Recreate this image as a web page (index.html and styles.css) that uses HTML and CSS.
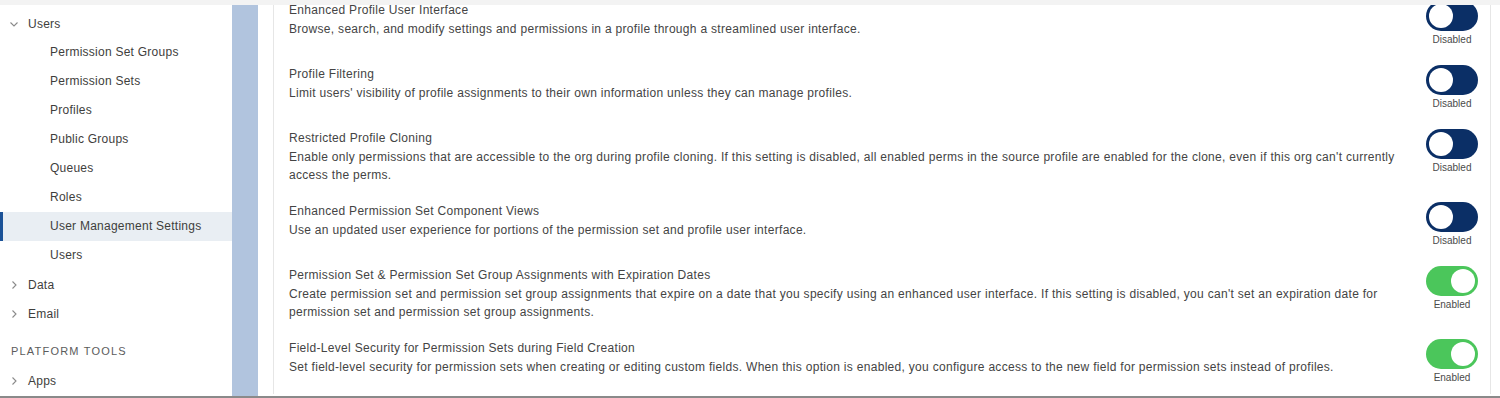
FILE: index.html
```html
<!doctype html>
<html lang="en">
  <head>
    <meta charset="UTF-8" />
    <title>User Management Settings</title>
    <link rel="stylesheet" href="styles.css">
  </head>

  <body>
    <div class="topbar"></div>

    <div class="page">
      <nav class="setup-tree">
        <div class="tree-node">
          <svg class="chevron" width="10" height="10" viewBox="0 0 10 10"><polyline points="1.5,3.5 5,7 8.5,3.5" /></svg>
          <span>Users</span>
        </div>
        <ul class="tree-children">
          <li>Permission Set Groups</li>
          <li>Permission Sets</li>
          <li>Profiles</li>
          <li>Public Groups</li>
          <li>Queues</li>
          <li>Roles</li>
          <li class="active">User Management Settings</li>
          <li>Users</li>
        </ul>
        <div class="tree-node">
          <svg class="chevron" width="10" height="10" viewBox="0 0 10 10"><polyline points="3.5,1.5 7,5 3.5,8.5" /></svg>
          <span>Data</span>
        </div>
        <div class="tree-node">
          <svg class="chevron" width="10" height="10" viewBox="0 0 10 10"><polyline points="3.5,1.5 7,5 3.5,8.5" /></svg>
          <span>Email</span>
        </div>
        <div class="tree-section">Platform Tools</div>
        <div class="tree-node">
          <svg class="chevron" width="10" height="10" viewBox="0 0 10 10"><polyline points="3.5,1.5 7,5 3.5,8.5" /></svg>
          <span>Apps</span>
        </div>
      </nav>

      <div class="gutter"></div>

      <main class="main">
        <div class="panel">
          <div class="setting">
            <div class="setting-text">
              <div class="setting-title">Enhanced Profile User Interface</div>
              <div class="setting-desc">Browse, search, and modify settings and permissions in a profile through a streamlined user interface.</div>
            </div>
            <div class="toggle">
              <span class="switch"></span>
              <span class="switch-label">Disabled</span>
            </div>
          </div>

          <div class="setting">
            <div class="setting-text">
              <div class="setting-title">Profile Filtering</div>
              <div class="setting-desc">Limit users' visibility of profile assignments to their own information unless they can manage profiles.</div>
            </div>
            <div class="toggle">
              <span class="switch"></span>
              <span class="switch-label">Disabled</span>
            </div>
          </div>

          <div class="setting">
            <div class="setting-text">
              <div class="setting-title">Restricted Profile Cloning</div>
              <div class="setting-desc">Enable only permissions that are accessible to the org during profile cloning. If this setting is disabled, all enabled perms in the source profile are enabled for the clone, even if this org can't currently access the perms.</div>
            </div>
            <div class="toggle">
              <span class="switch"></span>
              <span class="switch-label">Disabled</span>
            </div>
          </div>

          <div class="setting">
            <div class="setting-text">
              <div class="setting-title">Enhanced Permission Set Component Views</div>
              <div class="setting-desc">Use an updated user experience for portions of the permission set and profile user interface.</div>
            </div>
            <div class="toggle">
              <span class="switch"></span>
              <span class="switch-label">Disabled</span>
            </div>
          </div>

          <div class="setting">
            <div class="setting-text">
              <div class="setting-title">Permission Set &amp; Permission Set Group Assignments with Expiration Dates</div>
              <div class="setting-desc">Create permission set and permission set group assignments that expire on a date that you specify using an enhanced user interface. If this setting is disabled, you can't set an expiration date for permission set and permission set group assignments.</div>
            </div>
            <div class="toggle">
              <span class="switch on"></span>
              <span class="switch-label">Enabled</span>
            </div>
          </div>

          <div class="setting">
            <div class="setting-text">
              <div class="setting-title">Field-Level Security for Permission Sets during Field Creation</div>
              <div class="setting-desc">Set field-level security for permission sets when creating or editing custom fields. When this option is enabled, you configure access to the new field for permission sets instead of profiles.</div>
            </div>
            <div class="toggle">
              <span class="switch on"></span>
              <span class="switch-label">Enabled</span>
            </div>
          </div>
        </div>
      </main>
    </div>
  </body>
</html>
```

FILE: styles.css
```css
* {
  margin: 0;
  padding: 0;
  box-sizing: border-box;
  font-family: 'Liberation Sans', Arial, sans-serif;
}

body {
  width: 1500px;
  height: 398px;
  overflow: hidden;
  background-color: white;
  color: #3e3e3c;
}

.topbar {
  height: 5px;
  background-color: #f3f3f3;
}

.page {
  display: flex;
  height: 393px;
  border-bottom: 2px solid #8a8a8a;
}

/* left setup tree */
.setup-tree {
  width: 232px;
  flex-shrink: 0;
  padding-top: 4px;
  overflow: hidden;
  font-size: 12px;
  letter-spacing: 0.25px;
}

.tree-node {
  display: flex;
  align-items: center;
  height: 29px;
  padding-left: 9px;
}

.tree-node span {
  margin-left: 9px;
}

.chevron {
  fill: none;
  stroke: #8a8a8a;
  stroke-width: 1.1;
}

.tree-children {
  list-style: none;
}

.tree-children li {
  height: 29px;
  line-height: 29px;
  padding-left: 47px;
  border-left: 3px solid transparent;
}

.tree-children li.active {
  background-color: #e9eef3;
  border-left-color: #1b5297;
}

.tree-section {
  padding: 15px 11px 7px;
  line-height: 16px;
  font-size: 11px;
  letter-spacing: 1.2px;
  text-transform: uppercase;
  color: #5c5c5c;
}

.gutter {
  width: 26px;
  flex-shrink: 0;
  background-color: #b1c4de;
}

/* settings panel */
.main {
  flex: 1;
  overflow: hidden;
  padding: 0 9px 0 15px;
}

.panel {
  min-height: 100%;
  border-left: 1px solid #e6e6e6;
  border-right: 1px solid #e6e6e6;
  padding: 0 12px 0 15px;
}

.setting {
  display: flex;
  align-items: flex-start;
  gap: 16px;
  padding: 9px 0;
}

/* the list is scrolled a little */
.setting:first-child {
  margin-top: -13px;
}

.setting-text {
  flex: 1;
  font-size: 12px;
  line-height: 18px;
  letter-spacing: 0.3px;
  color: #444;
}

.setting-desc {
  margin-top: 1px;
}

.toggle {
  width: 52px;
  flex-shrink: 0;
  display: flex;
  flex-direction: column;
  align-items: center;
}

.switch {
  position: relative;
  width: 52px;
  height: 30px;
  border-radius: 15px;
  background-color: #0b2f66;
}

.switch::after {
  content: '';
  position: absolute;
  top: 3px;
  left: 3px;
  width: 24px;
  height: 24px;
  border-radius: 50%;
  background-color: white;
}

.switch.on {
  background-color: #4bc65b;
}

.switch.on::after {
  left: 25px;
}

.switch-label {
  margin-top: 2px;
  line-height: 14px;
  font-size: 10px;
  color: #4a4a4a;
}
```
